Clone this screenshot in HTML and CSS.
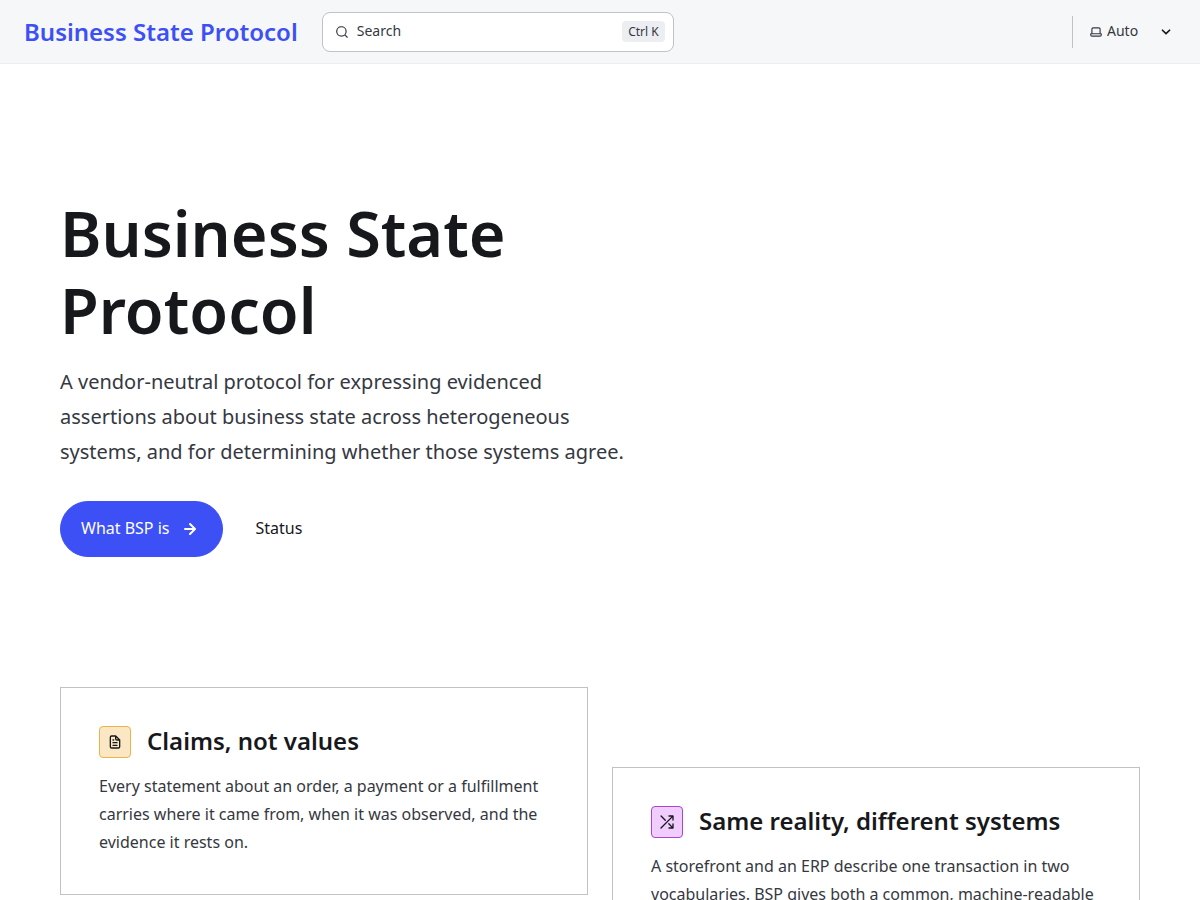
FILE: index.html
```html
<!DOCTYPE html>
<html lang="en">
<head>
    <meta charset="UTF-8">
    <meta name="viewport" content="width=device-width, initial-scale=1.0">
    <title>Business State Protocol</title>
    <link rel="stylesheet" href="styles.css">
</head>
<body>
    <header class="header">
        <a class="site-title" href="#">Business State Protocol</a>
        <button class="search" type="button">
            <svg class="icon" viewBox="0 0 24 24" aria-hidden="true"><path d="M21.71 20.29 18 16.61A9 9 0 1 0 16.61 18l3.68 3.68a.999.999 0 0 0 1.42 0 1 1 0 0 0 0-1.39ZM11 18a7 7 0 1 1 0-14 7 7 0 0 1 0 14Z"/></svg>
            <span class="search-label">Search</span>
            <kbd>Ctrl K</kbd>
        </button>
        <div class="theme">
            <label for="theme" aria-label="Theme">
                <svg class="icon" viewBox="0 0 24 24" aria-hidden="true"><path d="M21 14h-1V7a3 3 0 0 0-3-3H7a3 3 0 0 0-3 3v7H3a1 1 0 0 0-1 1v2a3 3 0 0 0 3 3h14a3 3 0 0 0 3-3v-2a1 1 0 0 0-1-1ZM6 7a1 1 0 0 1 1-1h10a1 1 0 0 1 1 1v7H6V7Zm14 10a1 1 0 0 1-1 1H5a1 1 0 0 1-1-1v-1h16v1Z"/></svg>
            </label>
            <select id="theme">
                <option>Dark</option>
                <option>Light</option>
                <option selected>Auto</option>
            </select>
            <svg class="icon caret" viewBox="0 0 24 24" aria-hidden="true"><path d="M17 9.17a1 1 0 0 0-1.41 0L12 12.71 8.46 9.17a1 1 0 1 0-1.41 1.42l4.24 4.24a1.002 1.002 0 0 0 1.42 0L17 10.59a1.002 1.002 0 0 0 0-1.42Z"/></svg>
        </div>
    </header>

    <main class="content">
        <section class="hero">
            <h1>Business State Protocol</h1>
            <p class="tagline">A vendor-neutral protocol for expressing evidenced assertions about business state across heterogeneous systems, and for determining whether those systems agree.</p>
            <div class="actions">
                <a class="action primary" href="#">
                    <span>What BSP is</span>
                    <svg class="icon" viewBox="0 0 24 24" aria-hidden="true"><path d="M17.92 11.62a1.001 1.001 0 0 0-.21-.33l-5-5a1.003 1.003 0 1 0-1.42 1.42l3.3 3.29H7a1 1 0 0 0 0 2h7.59l-3.3 3.29a1.002 1.002 0 0 0 .325 1.639 1 1 0 0 0 1.095-.219l5-5a1 1 0 0 0 .21-.33 1 1 0 0 0 0-.76Z"/></svg>
                </a>
                <a class="action" href="#"><span>Status</span></a>
            </div>
        </section>

        <section class="card-grid">
            <article class="card">
                <h2 class="card-title">
                    <span class="card-icon orange"><svg class="icon" viewBox="0 0 24 24" aria-hidden="true"><path d="M9 10h1a1 1 0 1 0 0-2H9a1 1 0 0 0 0 2Zm0 2a1 1 0 0 0 0 2h6a1 1 0 0 0 0-2H9Zm11-3.06a1.3 1.3 0 0 0-.06-.27v-.09c-.05-.1-.11-.2-.19-.28l-6-6a1.07 1.07 0 0 0-.28-.19h-.09a.88.88 0 0 0-.33-.11H7a3 3 0 0 0-3 3v14a3 3 0 0 0 3 3h10a3 3 0 0 0 3-3V8.94Zm-6-3.53L16.59 8H15a1 1 0 0 1-1-1V5.41ZM18 19a1 1 0 0 1-1 1H7a1 1 0 0 1-1-1V5a1 1 0 0 1 1-1h5v3a3 3 0 0 0 3 3h3v9Zm-3-3H9a1 1 0 0 0 0 2h6a1 1 0 0 0 0-2Z"/></svg></span>
                    <span class="card-heading">Claims, not values</span>
                </h2>
                <p>Every statement about an order, a payment or a fulfillment carries where it came from, when it was observed, and the evidence it rests on.</p>
            </article>
            <article class="card">
                <h2 class="card-title">
                    <span class="card-icon purple"><svg class="icon" viewBox="0 0 24 24" aria-hidden="true"><path d="M8.7 10a1 1 0 0 0 1.41 0 1 1 0 0 0 0-1.41l-6.27-6.3a1 1 0 0 0-1.42 1.42ZM21 14a1 1 0 0 0-1 1v3.59L15.44 14A1 1 0 0 0 14 15.44L18.59 20H15a1 1 0 0 0 0 2h6a1 1 0 0 0 .38-.08 1 1 0 0 0 .54-.54A1 1 0 0 0 22 21v-6a1 1 0 0 0-1-1Zm.92-11.38a1 1 0 0 0-.54-.54A1 1 0 0 0 21 2h-6a1 1 0 0 0 0 2h3.59L2.29 20.29a1 1 0 0 0 0 1.42 1 1 0 0 0 1.42 0L20 5.41V9a1 1 0 0 0 2 0V3a1 1 0 0 0-.08-.38Z"/></svg></span>
                    <span class="card-heading">Same reality, different systems</span>
                </h2>
                <p>A storefront and an ERP describe one transaction in two vocabularies. BSP gives both a common, machine-readable</p>
            </article>
        </section>
    </main>
</body>
</html>
```
FILE: styles.css
```css
:root {
    --accent: #3d50f5;
    --text: #17181c;
    --text-soft: #353841;
    --border: #c0c2c7;
    --hairline: #eceef2;
    --nav: #f6f7f9;
}

* { box-sizing: border-box; margin: 0; }
body { font-family: "Noto Sans", sans-serif; font-size: 16px; line-height: 28px; color: var(--text-soft); background: #fff; }
a { text-decoration: none; }
.icon { width: 16px; height: 16px; fill: currentColor; flex: none; }

.header { display: flex; align-items: center; gap: 24px; height: 64px; padding: 0 24px; background: var(--nav); border-bottom: 1px solid var(--hairline); }
.site-title { color: var(--accent); font-size: 24px; font-weight: 600; white-space: nowrap; }

.search { display: flex; align-items: center; gap: 8px; flex: 0 1 352px; height: 40px; padding: 0 8px 0 12px; border: 1px solid var(--border); border-radius: 8px; background: #fff; color: var(--text-soft); font: inherit; font-size: 14px; line-height: 20px; cursor: pointer; }
.search .icon, .theme label .icon { width: 14px; height: 14px; }
.search-label { padding-bottom: 2px; }
.search kbd { margin-left: auto; padding: 0 6px; border-radius: 4px; background: var(--hairline); font-family: inherit; font-size: 12px; line-height: 21px; }

.theme { display: flex; align-items: center; margin-left: auto; height: 32px; padding-left: 16px; border-left: 1px solid var(--border); color: var(--text-soft); }
.theme label { display: flex; }
.theme select { appearance: none; width: 73px; margin-right: -20px; padding: 0 20px 2px 4px; border: 0; background: none; color: inherit; font: inherit; font-size: 14px; line-height: 20px; cursor: pointer; }
.theme .caret { width: 20px; height: 20px; color: var(--text); pointer-events: none; }

.content { max-width: 1128px; margin: 0 auto; padding: 24px; }
.hero { padding: 106px 0; margin-bottom: 24px; }
.hero h1 { max-width: 580px; color: var(--text); font-size: 63px; font-weight: 600; line-height: 77px; }
.tagline { max-width: 580px; margin-top: 16px; font-size: 20px; line-height: 35px; }
.actions { display: flex; flex-wrap: wrap; gap: 16px; margin-top: 32px; }
.action { display: flex; align-items: center; gap: 8px; height: 56px; padding: 0 16px; border: 1px solid transparent; color: var(--text); }
.action span { padding-bottom: 2px; }
.action.primary { padding: 0 20px; border-color: var(--accent); border-radius: 28px; background: var(--accent); color: #fff; }
.action .icon { width: 24px; height: 24px; }

.card-grid { display: grid; grid-template-columns: 1fr 1fr; align-items: start; gap: 24px; }
.card { padding: 38px; border: 1px solid var(--border); }
.card:nth-child(even) { margin-top: 80px; }
.card-title { display: flex; align-items: center; gap: 16px; margin-bottom: 14px; color: var(--text); font-size: 24px; font-weight: 600; line-height: 30px; }
.card-heading { padding-bottom: 2px; }
.card-icon { display: flex; align-items: center; justify-content: center; width: 32px; height: 32px; border: 1px solid; border-radius: 4px; }
.card-icon .icon { color: var(--text); }
.orange { border-color: #e9b44c; background: #fbe7c3; }
.purple { border-color: #a846d2; background: #f0cdfd; }

@media (max-width: 800px) {
    .card-grid { grid-template-columns: 1fr; }
    .card:nth-child(even) { margin-top: 0; }
}
```
